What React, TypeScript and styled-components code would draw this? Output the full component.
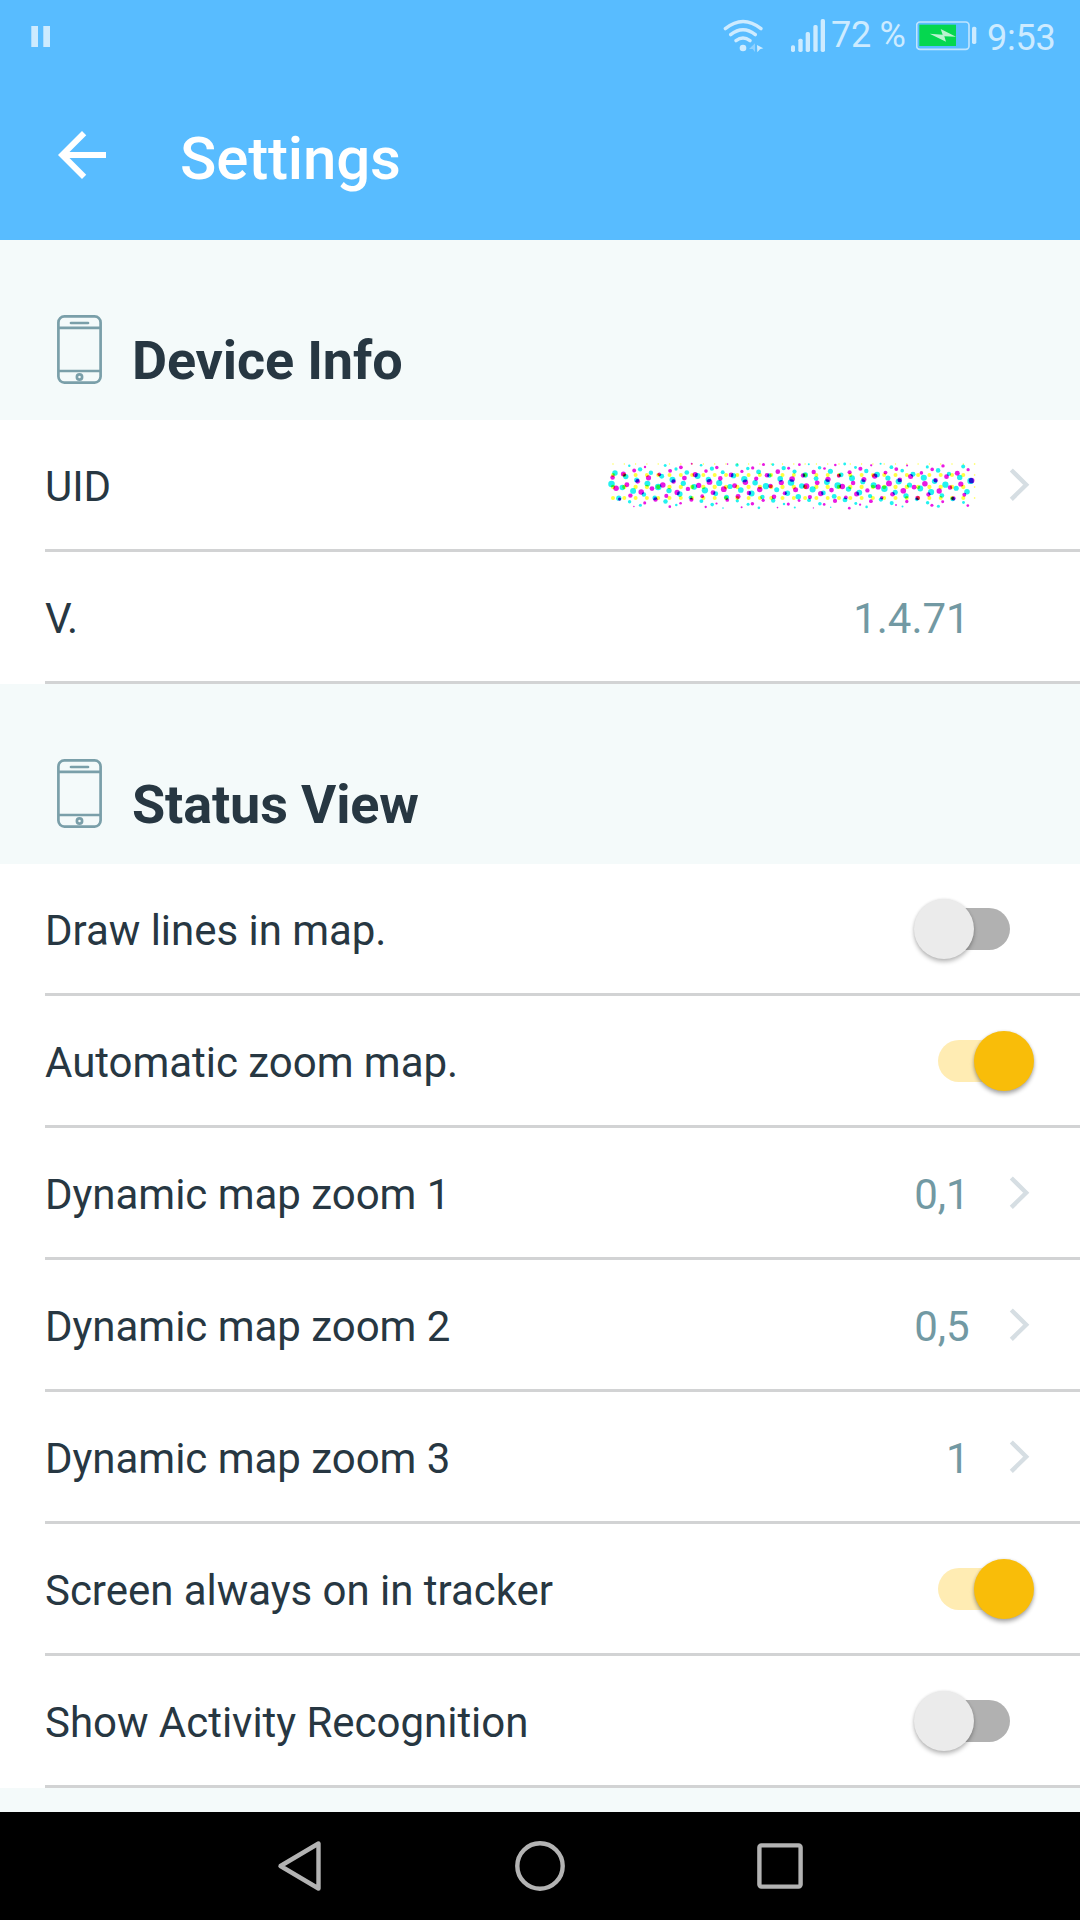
import React from "react";
import styled, { createGlobalStyle } from "styled-components";

const GlobalStyle = createGlobalStyle`
  * { box-sizing: border-box; }
  body { margin: 0; background: #f4fafa; font-family: Roboto, "Noto Sans", sans-serif; }
`;

const Screen = styled.div`
  width: 1080px;
  height: 1920px;
  display: flex;
  flex-direction: column;
  overflow: hidden;
  background: #f4fafa;
  color: #273742;
`;

const Header = styled.header`
  height: 240px;
  flex: none;
  background: #58bcff;
  color: #fff;
`;

const StatusBar = styled.div`
  height: 72px;
  display: grid;
  grid-template-columns: 723px 68px 40px 85px 71px 1fr;
  color: #cdebff;
  svg { display: block; }
`;

const StatusText = styled.span<{ $top: number; $spacing?: number }>`
  padding-top: ${(p) => p.$top}px;
  font-size: 36px;
  line-height: 42px;
  white-space: nowrap;
  letter-spacing: ${(p) => p.$spacing ?? 0}px;
`;

const Toolbar = styled.div`
  height: 168px;
  padding: 2px 0 0 46px;
  display: flex;
  align-items: center;
  gap: 62px;
`;

const BackIcon = styled.svg`
  width: 72px;
  height: 72px;
  margin-bottom: 4px;
`;

const Title = styled.h1`
  margin: 0;
  padding-top: 4px;
  font-size: 60px;
  line-height: 70px;
  font-weight: 500;
  letter-spacing: -0.15px;
`;

const SectionHead = styled.div`
  height: 180px;
  padding: 75px 0 0 57px;
  display: flex;
  align-items: flex-start;
  gap: 30px;
`;

const SectionTitle = styled.h2`
  margin: 14px 0 0;
  font-size: 54px;
  line-height: 64px;
  font-weight: 700;
  letter-spacing: -0.15px;
`;

const List = styled.div`
  background: #fff;
`;

const Row = styled.div`
  height: 132px;
  padding-left: 45px;
`;

const RowInner = styled.div<{ $right: number }>`
  height: 132px;
  padding-right: ${(p) => p.$right}px;
  border-bottom: 3px solid #d2d3d4;
  display: flex;
  align-items: center;
`;

const Label = styled.span`
  flex: 1;
  padding-top: 4px;
  font-size: 42px;
  line-height: 50px;
  letter-spacing: -0.03px;
`;

const Value = styled.span`
  padding-top: 4px;
  font-size: 42px;
  line-height: 50px;
  color: #7299a3;
`;

const Chevron = styled.svg`
  width: 22px;
  height: 34px;
  margin-left: 39px;
`;

const Speckle = styled.svg`
  width: 370px;
  height: 50px;
  isolation: isolate;
  margin: 2px -7px 0 0;
  circle { mix-blend-mode: multiply; }
`;

const Track = styled.div<{ $on: boolean }>`
  width: 96px;
  height: 60px;
  display: flex;
  align-items: center;
  justify-content: ${(p) => (p.$on ? "flex-end" : "flex-start")};
  &::before {
    content: "";
    order: ${(p) => (p.$on ? 0 : 1)};
    width: 66px;
    height: 42px;
    flex: none;
    margin: ${(p) => (p.$on ? "0 -30px 0 0" : "0 0 0 -30px")};
    border-radius: ${(p) => (p.$on ? "21px 0 0 21px" : "0 21px 21px 0")};
    background: ${(p) => (p.$on ? "#ffecb3" : "#b1b1b1")};
  }
`;

const Thumb = styled.div<{ $on: boolean }>`
  width: 60px;
  height: 60px;
  flex: none;
  z-index: 1;
  border-radius: 50%;
  background: ${(p) => (p.$on ? "#f9bd09" : "#ebebeb")};
  box-shadow: 0 3px 4px rgba(0, 0, 0, ${(p) => (p.$on ? 0.32 : 0.25)}), 0 0 3px rgba(0, 0, 0, 0.1);
`;

const Spacer = styled.div`
  flex: 1;
`;

const NavBar = styled.nav`
  height: 108px;
  flex: none;
  padding: 0 276px 0 276px;
  display: flex;
  align-items: center;
  justify-content: space-between;
  background: #000;
  svg { width: 48px; height: 52px; overflow: visible; }
`;

type Dot = { x: number; y: number; r: number; c: string };

const bulge = (y: number, peak: number) =>
  Math.max(3, peak * (1 - 0.55 * Math.pow((y - 135) / 62, 2)));

function buildDots(): Dot[] {
  const dots: Dot[] = [];
  const inside = (x: number, y: number) => x > 60 && x < 1152 && y > 71 && y < 205;
  for (let i = 0; i < 33; i++) {
    [72, 105, 141, 174].forEach((y, j) =>
      dots.push({ x: 69 + i * 33.9, y, r: i === 32 ? 2.5 : [2, 6, 6.5, 6][j], c: "#ffff40" })
    );
  }
  for (let m = -40; m < 60; m++) {
    for (let n = -40; n < 40; n++) {
      const wobble = ((Math.abs(m * 7 + n * 13) % 5) - 2) * 0.5;
      const cx = 258 + 32.4 * m - 10.5 * n;
      const cy = 87 + 10.5 * m + 32.4 * n;
      if (inside(cx, cy)) dots.push({ x: cx, y: cy, r: bulge(cy, 8.8) + wobble, c: "#22f2f0" });
      const mx = 165 + 32.4 * m + 10.5 * n;
      const my = 81 - 10.5 * m + 32.4 * n;
      if (inside(mx, my)) dots.push({ x: mx, y: my, r: bulge(my, 7.8) + wobble, c: "#ea1ae2" });
    }
  }
  return dots;
}

const DOTS = buildDots();

const PhoneIcon = () => (
  <svg width="45" height="69" viewBox="0 0 45 69" fill="none" stroke="#7a9fa9" strokeWidth="2.7">
    <rect x="1.4" y="1.4" width="42.2" height="66.2" rx="6" />
    <path d="M1 12.8H44M1 56H44" />
    <path d="M14 8H31" strokeLinecap="round" />
    <circle cx="22.5" cy="62" r="2.6" />
  </svg>
);

const Arrow = () => (
  <Chevron viewBox="0 0 22 34" fill="none" stroke="#d6dee3" strokeWidth="4.4">
    <path d="M2.3 2L17.2 16.7L2.3 31.4" />
  </Chevron>
);

type Item = { label: string; value?: string; arrow?: boolean; on?: boolean; masked?: boolean };

const SettingRow = ({ label, value, arrow, on, masked }: Item) => {
  const right = on === undefined ? (arrow ? 49.3 : 110.3) : on ? 46.5 : 70;
  return (
    <Row>
      <RowInner $right={right}>
        <Label>{label}</Label>
        {masked && (
          <Speckle viewBox="51 63 1110 150">
            {DOTS.map((d, i) => (
              <circle key={i} cx={d.x} cy={d.y} r={d.r} fill={d.c} />
            ))}
          </Speckle>
        )}
        {value && <Value>{value}</Value>}
        {arrow && <Arrow />}
        {on !== undefined && (
          <Track $on={on}>
            <Thumb $on={on} />
          </Track>
        )}
      </RowInner>
    </Row>
  );
};

const SECTIONS: { title: string; items: Item[] }[] = [
  {
    title: "Device Info",
    items: [
      { label: "UID", masked: true, arrow: true },
      { label: "V.", value: "1.4.71" },
    ],
  },
  {
    title: "Status View",
    items: [
      { label: "Draw lines in map.", on: false },
      { label: "Automatic zoom map.", on: true },
      { label: "Dynamic map zoom 1", value: "0,1", arrow: true },
      { label: "Dynamic map zoom 2", value: "0,5", arrow: true },
      { label: "Dynamic map zoom 3", value: "1", arrow: true },
      { label: "Screen always on in tracker", on: true },
      { label: "Show Activity Recognition", on: false },
    ],
  },
];

export default function App() {
  return (
    <Screen>
      <GlobalStyle />
      <Header>
        <StatusBar>
          <svg width="72" height="72" viewBox="0 0 72 72" fill="#cdebff">
            <path d="M31.3 26H38V47H31.3zM43.3 26H50V47H43.3z" />
          </svg>
          <svg width="68" height="72" viewBox="69 0 204 216" fill="none" stroke="#cdebff" strokeWidth="10" strokeLinecap="round">
            <path d="M76 86Q129 43 183 86M92 104Q129 74 166 104M108 122Q129 106 150 122" />
            <circle cx="129" cy="144" r="10" fill="#cdebff" stroke="none" />
            <path d="M171 135L190 145L180 148L172 157Z" fill="#cdebff" stroke="none" />
            <path d="M147 147L165 130V156L158 147Z" fill="#8fd1ff" stroke="none" />
          </svg>
          <svg width="40" height="72" viewBox="273 0 120 216" fill="#cdebff">
            <rect x="273" y="136" width="12" height="20" rx="5" />
            <rect x="295" y="116" width="13" height="40" rx="5" />
            <rect x="317" y="96" width="13" height="60" rx="5" />
            <rect x="340" y="75" width="13" height="81" rx="5" />
            <rect x="362" y="57" width="13" height="99" rx="5" />
          </svg>
          <StatusText $top={14} $spacing={-0.3}>72 %</StatusText>
          <svg width="71" height="72" viewBox="648 0 213 216">
            <rect x="650" y="66" width="157" height="82" rx="10" fill="none" stroke="#bfe4ff" strokeWidth="5" />
            <rect x="658" y="74" width="110" height="64" fill="#05d74f" />
            <path d="M689 101L728 104L722 87L768 110L733 109L738 125Z" fill="#b9f3cf" />
            <rect x="816" y="80" width="13" height="52" rx="5" fill="#cdebff" />
          </svg>
          <StatusText $top={17} $spacing={-0.2}>9:53</StatusText>
        </StatusBar>
        <Toolbar>
          <BackIcon viewBox="0 0 24 24" fill="#fff">
            <path d="M20 11H7.83l5.59-5.59L12 4l-8 8 8 8 1.41-1.41L7.83 13H20v-2z" />
          </BackIcon>
          <Title>Settings</Title>
        </Toolbar>
      </Header>
      {SECTIONS.map((s) => (
        <section key={s.title}>
          <SectionHead>
            <PhoneIcon />
            <SectionTitle>{s.title}</SectionTitle>
          </SectionHead>
          <List>
            {s.items.map((it) => (
              <SettingRow key={it.label} {...it} />
            ))}
          </List>
        </section>
      ))}
      <Spacer />
      <NavBar>
        <svg viewBox="0 0 48 52" fill="none" stroke="#b3b3b3" strokeWidth="4.4" strokeLinejoin="round">
          <path d="M4.5 26L42.5 3.5V48.5Z" />
        </svg>
        <svg viewBox="0 0 48 52" fill="none" stroke="#b3b3b3" strokeWidth="4.4">
          <circle cx="24" cy="26" r="22.7" />
        </svg>
        <svg viewBox="0 0 48 52" fill="none" stroke="#b3b3b3" strokeWidth="4.4">
          <rect x="3.4" y="5.4" width="41.2" height="41.2" rx="2" />
        </svg>
      </NavBar>
    </Screen>
  );
}
